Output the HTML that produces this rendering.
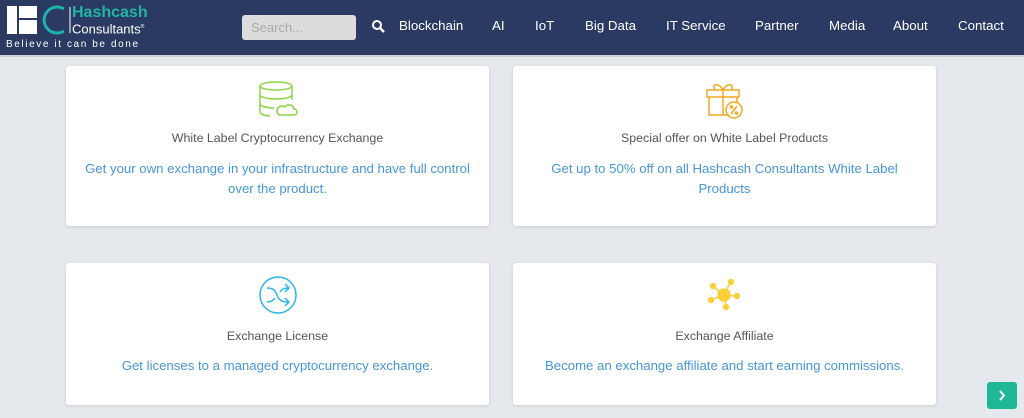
<!DOCTYPE html>
<html><head><meta charset="utf-8"><style>
*{margin:0;padding:0;box-sizing:border-box}
body{width:1024px;height:418px;overflow:hidden;background:#e5e8ec;font-family:"Liberation Sans",sans-serif;position:relative}
.hdr{position:absolute;left:0;top:0;width:1024px;height:57px;background:#2b3a62;border-bottom:2px solid #c9ccd2}
.nav{position:absolute;top:18px;color:#fff;font-size:13.3px}
.search{position:absolute;left:242px;top:15px;width:114px;height:25px;background:#dcdcdc;border-radius:3px;color:#aaa;font-size:13px;padding:5px 9px}
.card{position:absolute;background:#fff;border-radius:3px;box-shadow:0 1px 3px rgba(0,0,0,.12);text-align:center}
.t{position:absolute;left:0;right:0;font-size:12.4px;color:#555}
.d{position:absolute;left:0;right:0;font-size:13.2px;color:#4796dc;line-height:20px}
.ic{position:absolute;left:50%;transform:translateX(-50%)}
</style></head><body>
<div class="hdr">
<svg style="position:absolute;left:6px;top:5px" width="66" height="30">
<rect x="1" y="1" width="10" height="28" fill="#fff"/><rect x="13" y="1" width="18" height="12" fill="#fff"/><rect x="13" y="15" width="18" height="14" fill="#fff"/>
<path d="M58 4 A13 13 0 1 0 58 26" fill="none" stroke="#1fb3a6" stroke-width="3"/>
<path d="M64 2 v26" stroke="#fff"/></svg>
<div style="position:absolute;left:72px;top:5px;color:#21b5a8;font-weight:bold;font-size:16px;line-height:16px">Hashcash</div>
<div style="position:absolute;left:72px;top:21px;color:#fff;font-size:13px;line-height:13px">Consultants<sup style="font-size:5px">®</sup></div>
<div style="position:absolute;left:6px;top:39px;color:#fff;font-size:10px;letter-spacing:1.6px">Believe it can be done</div>
<div class="search">Search...</div>
<svg style="position:absolute;left:372px;top:20px" width="13" height="13"><circle cx="5" cy="5" r="4" fill="none" stroke="#fff" stroke-width="2"/><path d="M8 8l4 4" stroke="#fff" stroke-width="2.5"/></svg>
<span class="nav" style="left:399px">Blockchain</span>
<span class="nav" style="left:492px">AI</span>
<span class="nav" style="left:535px">IoT</span>
<span class="nav" style="left:585px">Big Data</span>
<span class="nav" style="left:666px">IT Service</span>
<span class="nav" style="left:755px">Partner</span>
<span class="nav" style="left:829px">Media</span>
<span class="nav" style="left:893px">About</span>
<span class="nav" style="left:958px">Contact</span>
</div>

<div class="card" style="left:66px;top:66px;width:423px;height:160px">
<svg class="ic" style="top:14px" width="40" height="40" viewBox="0 0 40 40" fill="none" stroke="#8bd346" stroke-width="1.5"><ellipse cx="18" cy="6" rx="16" ry="4"/><path d="M2 6v26c0 2 5 4 10 4M34 6v14M2 15c0 2 7 4 16 4s16-2 16-4M2 24c0 2 7 4 14 4"/><path d="M21 35h15a3 3 0 0 0 0-6 5 5 0 0 0-9-2 4 4 0 0 0-6 8z"/></svg>
<div class="t" style="top:65px">White Label Cryptocurrency Exchange</div>
<div class="d" style="top:93px">Get your own exchange in your infrastructure and have full control<br>over the product.</div>
</div>
<div class="card" style="left:513px;top:66px;width:423px;height:160px">
<svg class="ic" style="top:14px" width="40" height="40" viewBox="0 0 40 40" fill="none" stroke="#f0a820" stroke-width="1.5"><path d="M2 10h32v7H2zM4 17v18h20M32 17v6M18 10v25M10 10c-4-6 4-8 8 0 4-8 12-6 8 0"/><circle cx="29" cy="30" r="8"/><path d="M26 34l6-8"/><circle cx="26.5" cy="27" r="1"/><circle cx="31.5" cy="33" r="1"/></svg>
<div class="t" style="top:65px">Special offer on White Label Products</div>
<div class="d" style="top:93px">Get up to 50% off on all Hashcash Consultants White Label<br>Products</div>
</div>
<div class="card" style="left:66px;top:263px;width:423px;height:142px">
<svg class="ic" style="top:12px" width="40" height="40" viewBox="0 0 40 40" fill="none" stroke="#29b6e8" stroke-width="1.5"><circle cx="20" cy="20" r="18"/><path d="M9 13c6 0 8 2 10 7s4 7 11 7M9 27c5 0 6-2 8-4M22 17c2-3 4-4 9-4M27 9l4 4-4 4M27 23l4 4-4 4"/></svg>
<div class="t" style="top:66px">Exchange License</div>
<div class="d" style="top:93px">Get licenses to a managed cryptocurrency exchange.</div>
</div>
<div class="card" style="left:513px;top:263px;width:423px;height:142px">
<svg class="ic" style="top:12px" width="44" height="40" viewBox="0 0 44 40" fill="#f9d03c" stroke="#f9d03c" stroke-width="1.5"><circle cx="21" cy="20" r="6"/><path d="M21 20L10 11M21 20l6-12M21 20l10 1M21 20l2 11M21 20l-11 4"/><circle cx="10" cy="11" r="2.5"/><circle cx="28" cy="7" r="2.5"/><circle cx="34" cy="21" r="2.5"/><circle cx="23" cy="32" r="2.5"/><circle cx="8" cy="25" r="2.5"/></svg>
<div class="t" style="top:66px">Exchange Affiliate</div>
<div class="d" style="top:93px">Become an exchange affiliate and start earning commissions.</div>
</div>
<div style="position:absolute;left:987px;top:382px;width:30px;height:27px;background:#1fb795;border-radius:3px"><svg width="30" height="27"><path d="M13 9l4 4.5-4 4.5" fill="none" stroke="#fff" stroke-width="2"/></svg></div>
</body></html>
